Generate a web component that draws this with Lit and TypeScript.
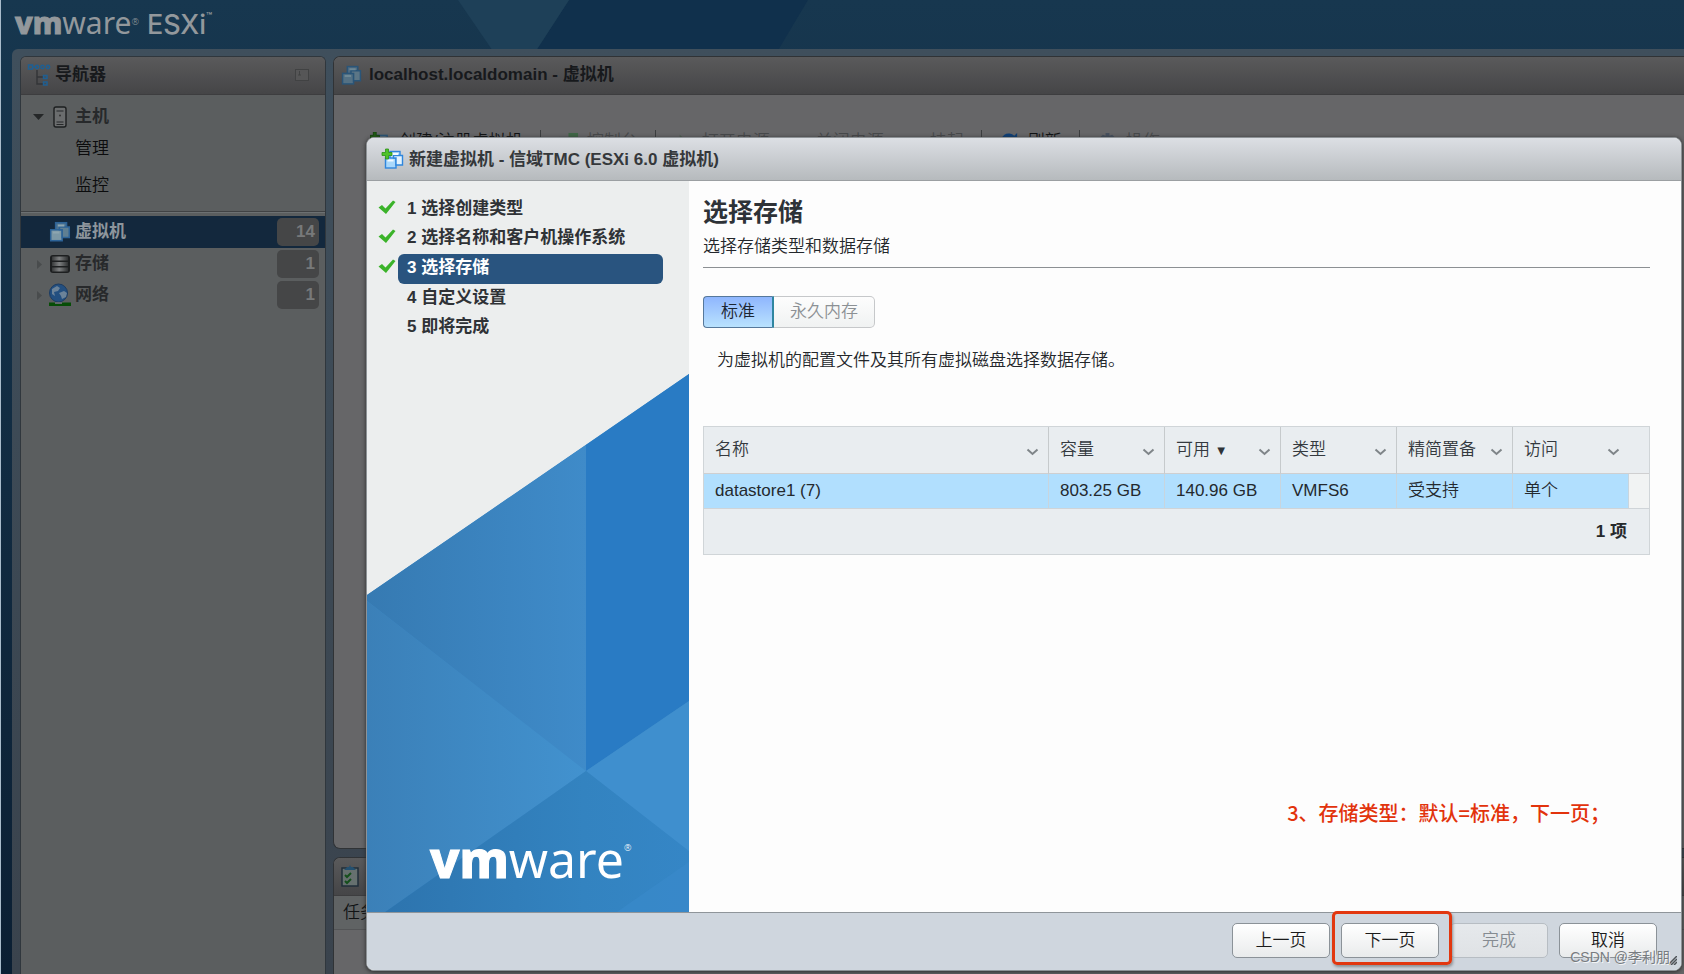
import { LitElement, html, css, svg, nothing } from "lit";
import { customElement, state } from "lit/decorators.js";
import { classMap } from "lit/directives/class-map.js";

const vmsIcon = svg`
  <rect x="6" y="1.5" width="10" height="10" fill="var(--icon-back)" stroke="var(--icon-line)" stroke-width="1.4"/>
  <rect x="1.5" y="8" width="10.5" height="10" fill="var(--icon-front)" stroke="var(--icon-line)" stroke-width="1.4"/>
  <path d="M9.500 5.500H18.500V15H12V8H9.500z" fill="var(--icon-mid)" stroke="var(--icon-line)" stroke-width="1.4"/>
  <path d="M8 4h6M3.500 10.500h6" stroke="var(--icon-shine)" stroke-width="1.8"/>`;

const plus = svg`<path d="M3.500 0h3v3.500H10v3H6.500V10h-3V6.500H0v-3h3.500z" fill="var(--plus)" stroke="var(--plus-line)" stroke-width=".8"/>`;

interface Tool {
  label: string;
  icon: unknown;
  enabled: boolean;
  divider: boolean;
}

@customElement("brand-logo")
export class BrandLogo extends LitElement {
  static styles = css`
    :host { display: inline-flex; align-items: flex-start; font-family: "Noto Sans", sans-serif; line-height: 1; color: inherit; }
    .vm { font-weight: 800; -webkit-text-stroke: 1px currentColor; stroke-linejoin: round; }
    .ware { font-weight: 400; }
    .reg { font-size: 9px; line-height: 1; padding-top: 1em; }
  `;
  render() {
    return html`<span class="vm">vm</span><span class="ware">ware</span><span class="reg">®</span>`;
  }
}

@customElement("nav-panel")
export class NavPanel extends LitElement {
  static styles = css`
    :host { display: flex; flex-direction: column; flex: 0 0 306px; box-sizing: border-box; border: 1px solid #30373d; border-bottom: 0; border-radius: 6px 6px 0 0; background: #5b5e5f; overflow: hidden;
      --icon-back: #4c7391; --icon-mid: #5f7f92; --icon-front: #7c98a6; --icon-line: #2d6397; --icon-shine: #8da5b0; }
    .head { display: flex; align-items: center; gap: 4px; box-sizing: border-box; height: 38px; padding: 0 16px 1px 6px; border-bottom: 1px solid #3d3d3f; background: linear-gradient(#5a5a5b, #454547); }
    .title { flex: 1; margin: 0; font-size: 17px; line-height: 24px; font-weight: 700; color: #17191c; }
    ul { list-style: none; margin: 0; padding: 0; }
    .top { padding: 6px 0 5px; border-bottom: 1px solid #404244; box-shadow: 0 1px #6c7072; }
    .row { display: flex; align-items: center; height: 31px; padding: 0 6px 0 12px; color: #27292b; font-weight: 700; text-decoration: none; line-height: 24px; }
    .child { padding-left: 54px; height: 40px; font-weight: 350; color: #0b0c0d; }
    .first { height: 34px; }
    .arrow { width: 12px; height: 12px; margin-right: 4px; }
    .pic { width: 22px; height: 24px; margin-right: 4px; }
    .label { flex: 1; }
    .list { margin-top: 4px; }
    .on { background: #13283d; color: #8d959c; height: 32px; }
    .badge { box-sizing: border-box; width: 42px; height: 28px; padding-right: 4px; border-radius: 5px; background: #454647; color: #77797a; text-align: right; line-height: 28px; font-size: 17px; }
  `;
  render() {
    return html`
      <div class="head">
        <svg width="24" height="24" viewBox="0 0 24 24" fill="none" stroke="#1f5f92" stroke-width="1.500">
          <rect x="1.500" y="2" width="4" height="4"/><path d="M6 4h2"/>
          <circle cx="10" cy="4" r="1.700"/><circle cx="15.500" cy="4" r="1.700"/><circle cx="21" cy="4" r="1.700"/>
          <path d="M10 7v14H16M10 14H16" stroke="#343638"/>
          <rect x="16.500" y="12.500" width="3.500" height="3"/><rect x="16.500" y="19" width="3.500" height="3"/>
        </svg>
        <h2 class="title">导航器</h2>
        <svg width="14" height="14" viewBox="0 0 14 14" fill="#565657" stroke="#414243"><rect x=".5" y="1.500" width="13" height="11"/><path d="M4.500 3v4M3 7h3" fill="none"/></svg>
      </div>
      <ul class="top">
        <li><a class="row" href="#host">
          <svg class="arrow" viewBox="0 0 12 12"><path d="M0 3h11L5.500 9z" fill="#252728"/></svg>
          <svg class="pic" viewBox="0 0 22 24"><rect x="5" y="2" width="12" height="20" rx="2" fill="#6b6d6e" stroke="#1d1f20" stroke-width="1.400"/><path d="M7.500 6h7M7.500 17h7M7.500 19.500h7" stroke="#27292a"/><circle cx="11" cy="10.500" r="1" fill="#333"/></svg>
          <span class="label">主机</span></a></li>
        <li><a class="row child first" href="#manage">管理</a></li>
        <li><a class="row child" href="#monitor">监控</a></li>
      </ul>
      <ul class="list">
        <li><a class="row on" href="#vms">
          <svg class="arrow" viewBox="0 0 12 12"></svg>
          <svg class="pic" viewBox="0 -1 20 22">${vmsIcon}</svg>
          <span class="label">虚拟机</span><span class="badge">14</span></a></li>
        <li><a class="row" href="#storage">
          <svg class="arrow" viewBox="0 0 12 12"><path d="M4 2l5 4.500L4 11z" fill="#494c4d"/></svg>
          <svg class="pic" viewBox="0 0 22 24">
            <defs><linearGradient id="disk"><stop offset="0" stop-color="#37393a"/><stop offset=".45" stop-color="#7d7f80"/><stop offset="1" stop-color="#303233"/></linearGradient></defs>
            <rect x="1" y="3" width="20" height="18" rx="3" fill="#1d1f20"/><path d="M3 4.500h16v4H3zM3 10h16v4H3zM3 15.500h16v4H3z" fill="url(#disk)"/></svg>
          <span class="label">存储</span><span class="badge">1</span></a></li>
        <li><a class="row" href="#network">
          <svg class="arrow" viewBox="0 0 12 12"><path d="M4 2l5 4.500L4 11z" fill="#494c4d"/></svg>
          <svg class="pic" viewBox="0 0 22 24"><circle cx="9.500" cy="10" r="9" fill="#234f80" stroke="#1c3c63"/><path d="M3 6l5-3 3 2-2 3-4 1 1 4-3-2zM10 10l5-2 3 2-1 4-4 2-1-3z" fill="#6c8399"/><path d="M5 19h10l2 4H3z" fill="#5f686b"/><path d="M0 20.500h6M13 20.500h9M0 22h22" stroke="#064d06" stroke-width="2"/></svg>
          <span class="label">网络</span><span class="badge">1</span></a></li>
      </ul>`;
  }
}

@customElement("new-vm-wizard")
export class NewVmWizard extends LitElement {
  static styles = css`
    :host { display: flex; flex-direction: column; box-sizing: border-box; border: 1px solid #8d9296; border-radius: 8px; background: #fdfdfd; overflow: hidden; color: #24272b; box-shadow: 0 1px 4px #2a2a2a;
      --icon-back: #c4e2fb; --icon-mid: #e3f3fe; --icon-front: #a9d8fb; --icon-line: #2f86dd; --icon-shine: #f2faff; --plus: #4fc32b; --plus-line: #2c9117; }
    .title-bar { display: flex; align-items: center; gap: 5px; box-sizing: border-box; height: 43px; padding: 1px 14px 0; border-bottom: 1px solid #9b9fa2; background: linear-gradient(#dcdfe4, #b6babd); }
    .title-bar h2 { margin: 0; font-size: 17px; line-height: 24px; font-weight: 700; color: #35383b; }
    .middle { flex: 1; min-height: 0; display: flex; }
    .side { flex: 0 0 322px; display: flex; flex-direction: column; position: relative; background: #eceeee; }
    .steps { list-style: none; margin: 0; padding: 14px 26px 0 11px; }
    .step { display: flex; align-items: flex-start; height: 29px; font-size: 17px; font-weight: 700; color: #2f3236; }
    .tick { flex: 0 0 20px; height: 17px; padding-top: 4px; }
    .name { flex: 1; height: 29px; line-height: 28px; padding-left: 9px; border-radius: 6px; }
    .current { height: 30px; margin-top: 1px; }
    .current .name { height: 30px; background: #29547f; color: #fff; }
    .art { position: absolute; left: 0; bottom: 0; width: 100%; height: 540px; }
    .logo { position: absolute; left: 63px; bottom: 28px; font-size: 50px; color: #fff; }
    .main { flex: 1; min-width: 0; padding: 14px 31px 0 14px; }
    .main h1 { margin: 0; font-size: 25px; line-height: 34px; font-weight: 700; color: #2e3237; }
    .sub { margin: 5px 0 0; font-size: 17px; line-height: 26px; }
    .rule { margin: 7px 0 28px; border: 0; border-top: 1px solid #8c9093; }
    .segment { display: flex; }
    .seg { box-sizing: border-box; height: 32px; margin: 0; border: 1px solid #c6c8ca; border-left: 0; border-radius: 0 5px 5px 0; background: linear-gradient(#fdfdfd, #f0f2f2); font: inherit; line-height: 24px; color: #8c9094; padding: 0 16px; }
    .seg.on { border: 1px solid #56789b; border-right: 2px solid #2f86a0; border-radius: 4px 0 0 4px; background: linear-gradient(#8fb6fe, #b9e2fe); color: #1c2632; padding: 0 17px; }
    .hint { margin: 19px 14px 51px; font-size: 17px; line-height: 28px; }
    .grid { width: 100%; table-layout: fixed; border-collapse: separate; border-spacing: 0; border: 1px solid #d0d5d8; background: #e9edf0; line-height: 24px; }
    .grid th, .grid td { box-sizing: border-box; padding: 0 11px; text-align: left; font-weight: 350; white-space: nowrap; }
    .grid th { height: 47px; border-right: 1px solid #c6cacc; border-bottom: 1px solid #cfcfd0; color: #34393e; }
    .grid th:nth-last-child(-n + 2) { border-right: 0; }
    .cell { display: flex; align-items: center; margin-right: -2px; }
    .cell .text { flex: 1; }
    .sort { font-size: 13px; color: #2e3338; }
    .menu { display: block; padding: 0; border: 0; background: none; height: 10px; }
    .grid tbody td { height: 35px; border-right: 1px solid #c8d5de; border-bottom: 1px solid #cfd4d8; background: #b1dffe; color: #24292e; }
    .grid tbody .rest { background: #f1f3f3; border-right: 0; }
    .grid tfoot td { height: 45px; text-align: right; font-weight: 700; padding-right: 22px; color: #26292c; }
    .wide { width: 116px; }
    .slot { width: 20px; }
    .foot { display: flex; justify-content: flex-end; gap: 11px; box-sizing: border-box; height: 58px; padding: 10px 24px 0; border-top: 1px solid #8f959a; background: #cfd6de; }
    .btn { box-sizing: border-box; width: 98px; height: 35px; padding: 0; border: 1px solid #8b9298; border-radius: 5px; background: linear-gradient(#fff, #e9ebec); font: inherit; line-height: 24px; color: #1b1b1b; }
    .btn:disabled { border-color: #b7bdc3; background: linear-gradient(#e6e9ec, #dfe2e5); color: #858b91; }
    .grip { position: absolute; right: 4px; bottom: 5px; }
  `;

  @state() private mode = "standard";

  private steps = ["选择创建类型", "选择名称和客户机操作系统", "选择存储", "自定义设置", "即将完成"];
  private columns = ["名称", "容量", "可用", "类型", "精简置备", "访问"];
  private rows = [["datastore1 (7)", "803.25 GB", "140.96 GB", "VMFS6", "受支持", "单个"]];

  render() {
    return html`
      <div class="title-bar">
        <svg width="23" height="24" viewBox="0 0 23 24"><g transform="translate(3 2)">${vmsIcon}</g><g transform="translate(1 1)">${plus}</g></svg>
        <h2>新建虚拟机 - 信域TMC (ESXi 6.0 虚拟机)</h2>
      </div>
      <div class="middle">
        <div class="side">
          <svg class="art" viewBox="0 0 322 540" preserveAspectRatio="none">
            <defs>
              <linearGradient id="up"><stop offset="0" stop-color="#367ab2"/><stop offset="1" stop-color="#3f8bc9"/></linearGradient>
              <linearGradient id="low"><stop offset="0" stop-color="#3b80b8"/><stop offset="1" stop-color="#4292cf"/></linearGradient>
              <linearGradient id="base"><stop offset="0" stop-color="#2d74ae"/><stop offset=".65" stop-color="#3383c0"/><stop offset="1" stop-color="#3586c6"/></linearGradient>
            </defs>
            <path d="M0 223L322 2V540H0z" fill="#3a87c5"/>
            <path d="M0 223L219 73V399L0 229z" fill="url(#up)"/>
            <path d="M219 73L322 2V329L219 399z" fill="#297bc4"/>
            <path d="M0 229L219 399L18 540H0z" fill="url(#low)"/>
            <path d="M219 399L322 329V480z" fill="#3f8fce"/>
            <path d="M219 399L322 479V540H18z" fill="url(#base)"/>
            <path d="M250 540L322 490V540z" fill="#3a8bcb" opacity=".6"/>
          </svg>
          <ol class="steps">
            ${this.steps.map((s, i) => html`
              <li class=${classMap({ step: true, current: i === 2 })}>
                <svg class="tick" viewBox="0 0 20 17">${i < 3 ? svg`<path d="M.500 8.500L4 6l3.500 3.500L15 1.500 17.500 3 8 15z" fill="#3bb32a"/>` : nothing}</svg>
                <span class="name">${i + 1} ${s}</span>
              </li>`)}
          </ol>
          <brand-logo class="logo"></brand-logo>
        </div>
        <div class="main">
          <h1>选择存储</h1>
          <p class="sub">选择存储类型和数据存储</p>
          <hr class="rule">
          <div class="segment">
            <button class=${classMap({ seg: true, on: this.mode === "standard" })} @click=${() => (this.mode = "standard")}>标准</button>
            <button class="seg" disabled>永久内存</button>
          </div>
          <p class="hint">为虚拟机的配置文件及其所有虚拟磁盘选择数据存储。</p>
          <table class="grid">
            <colgroup><col>${[1, 2, 3, 4, 5].map(() => html`<col class="wide">`)}<col class="slot"></colgroup>
            <thead><tr>
              ${this.columns.map((c) => html`<th><div class="cell"><span class="text">${c}${c === "可用" ? html` <span class="sort">▼</span>` : nothing}</span>
                <button class="menu" aria-label=${c}><svg width="13" height="9" viewBox="0 0 13 9"><path d="M1.500 1.500l5 4.500 5-4.500" fill="none" stroke="#7f8589" stroke-width="2"/></svg></button></div></th>`)}
              <th></th>
            </tr></thead>
            <tbody>${this.rows.map((r) => html`<tr>${r.map((v) => html`<td>${v}</td>`)}<td class="rest"></td></tr>`)}</tbody>
            <tfoot><tr><td colspan="7">1 项</td></tr></tfoot>
          </table>
        </div>
      </div>
      <div class="foot">
        <button class="btn">上一页</button>
        <button class="btn">下一页</button>
        <button class="btn" disabled>完成</button>
        <button class="btn">取消</button>
      </div>
      <svg class="grip" width="10" height="9" viewBox="0 0 10 9"><path d="M1 9L10 0M4 9l6-6M7 9l3-3" stroke="#4d5257" stroke-width="1.500"/></svg>`;
  }
}

@customElement("app-root")
export class AppRoot extends LitElement {
  static styles = css`
    :host { display: flex; flex-direction: column; position: relative; box-sizing: border-box; height: 100vh; overflow: hidden; border-left: 1px solid #a9bccb; background: linear-gradient(#17374f, #0b1f33);
      font-family: "Liberation Sans", "Noto Sans CJK SC", sans-serif; font-size: 17px; font-weight: 350; color: #111315; }
    .sky { position: absolute; left: 0; top: 0; }
    .top { position: relative; display: flex; align-items: flex-start; gap: 8px; box-sizing: border-box; height: 49px; padding: 8px 14px 0; color: #93989c; }
    .small { font-size: 30px; }
    .product { display: flex; font: 500 27px/34px "Inter", sans-serif; }
    .tm { font-size: 10px; line-height: 16px; }
    .frame { position: relative; flex: 1; min-height: 0; display: flex; gap: 7px; margin-left: 11px; padding: 7px 0 0 8px; border-radius: 6px 0 0 0; background: linear-gradient(#3f4f5c, #3a434d); }
    .work { flex: 1; min-width: 0; display: flex; flex-direction: column; gap: 8px; --icon-back: #4f6b80; --icon-mid: #5c7686; --icon-front: #547184; --icon-line: #2a5578; --icon-shine: #6e8895; --plus: #1f5e12; --plus-line: #123f0b; }
    .panel { box-sizing: border-box; border: 1px solid #303336; border-right: 0; border-radius: 7px 0 0 7px; background: #666668; overflow: hidden; }
    .vms { flex: 1; min-height: 0; }
    .tasks { flex: 0 0 117px; border-bottom: 0; border-radius: 7px 0 0 0; }
    .head { display: flex; align-items: center; gap: 7px; box-sizing: border-box; height: 38px; padding: 0 7px 1px; border-bottom: 1px solid #3d3d3f; background: linear-gradient(#5a5a5b, #454547); }
    .head h1 { margin: 0; font-size: 17px; line-height: 24px; font-weight: 700; color: #17191c; }
    .col { height: 33px; line-height: 34px; padding-left: 9px; border-bottom: 1px solid #535456; background: #606364; }
    .tools { display: flex; align-items: center; gap: 17px; padding: 33px 36px; }
    .tool { display: flex; align-items: center; gap: 8px; height: 28px; margin: 0; padding: 0; border: 0; background: none; font: inherit; line-height: 24px; color: #111315; white-space: nowrap; }
    .tool:disabled { color: #47494b; }
    .bar { width: 1px; height: 24px; background: #3b3d3f; }
    .dialog { position: absolute; left: 365px; right: 2px; top: 137px; bottom: 3px; }
    .note { position: absolute; right: 74px; bottom: 147px; margin: 0; font-size: 20px; line-height: 28px; font-weight: 500; font-family: "Noto Sans CJK SC", sans-serif; color: #e2330c; }
    .mark { position: absolute; right: 232px; bottom: 9px; box-sizing: border-box; width: 120px; height: 54px; border: 3px solid #e2370f; border-radius: 5px; box-shadow: 1px 2px 3px #8a8f94; }
    .water { position: absolute; right: 14px; bottom: 5px; font-size: 14px; line-height: 24px; font-weight: 400; color: #787c80; text-shadow: 1px 1px #f4f5f6; }
  `;

  private tools: Tool[] = [
    { label: "创建/注册虚拟机", enabled: true, divider: true, icon: svg`<g transform="translate(2 2)">${vmsIcon}</g>${plus}` },
    { label: "控制台", enabled: false, divider: true, icon: svg`<rect x="1" y="5" width="14" height="12" fill="#5a5f62"/><rect x="11" y="1" width="10" height="9" fill="#3f6646"/>` },
    { label: "打开电源", enabled: false, divider: false, icon: svg`<path d="M7 3l9 8-9 8z" fill="#4d5f50"/>` },
    { label: "关闭电源", enabled: false, divider: false, icon: svg`<rect x="4" y="6" width="13" height="12" fill="#655550"/>` },
    { label: "挂起", enabled: false, divider: true, icon: svg`<path d="M5 6h4v12H5zM12 6h4v12h-4z" fill="#5b5c57"/>` },
    { label: "刷新", enabled: true, divider: true, icon: svg`<path d="M3 13a8 8 0 0 1 13-9l3-3v9h-9l3-3a5 5 0 0 0-7 6z" fill="#0d3f78"/>` },
    { label: "操作", enabled: false, divider: false, icon: svg`<path d="M9 1h4v3l3-1 3 3-2 3 4 1v4H2v-4l3-1-2-3 3-3 3 1z" fill="#46505f"/>` },
  ];

  render() {
    return html`
      <svg class="sky" width="1684" height="57" viewBox="0 0 1684 57">
        <path d="M568 0H807L773 57H531z" fill="#10304c"/>
        <path d="M457 0H568L531 57H496z" fill="#1e4058"/>
      </svg>
      <header class="top">
        <brand-logo class="small"></brand-logo>
        <span class="product">ESXi<span class="tm">™</span></span>
      </header>
      <div class="frame">
        <nav-panel></nav-panel>
        <div class="work">
          <section class="panel vms">
            <div class="head">
              <svg width="21" height="21" viewBox="0 0 20 20">${vmsIcon}</svg>
              <h1>localhost.localdomain - 虚拟机</h1>
            </div>
            <div class="tools">
              ${this.tools.map((t) => html`
                <button class="tool" ?disabled=${!t.enabled}><svg width="21" height="21" viewBox="0 0 22 22">${t.icon}</svg>${t.label}</button>
                ${t.divider ? html`<span class="bar"></span>` : nothing}`)}
            </div>
          </section>
          <section class="panel tasks">
            <div class="head">
              <svg width="19" height="24" viewBox="0 0 19 24"><rect x="1" y="4" width="16" height="18" fill="#66706f" stroke="#202e3a" stroke-width="1.500"/><path d="M3 6l3-3h2l1-2 1 2h2l3 3z" fill="#24506f"/><path d="M4 11l2 2 4-4M4 17l2 2 4-4" fill="none" stroke="#154f1c" stroke-width="2"/></svg>
            </div>
            <div class="col">任务</div>
          </section>
        </div>
      </div>
      <new-vm-wizard class="dialog" role="dialog"></new-vm-wizard>
      <p class="note">3、存储类型：默认=标准，下一页；</p>
      <span class="mark"></span>
      <span class="water">CSDN @李利朋</span>`;
  }
}
